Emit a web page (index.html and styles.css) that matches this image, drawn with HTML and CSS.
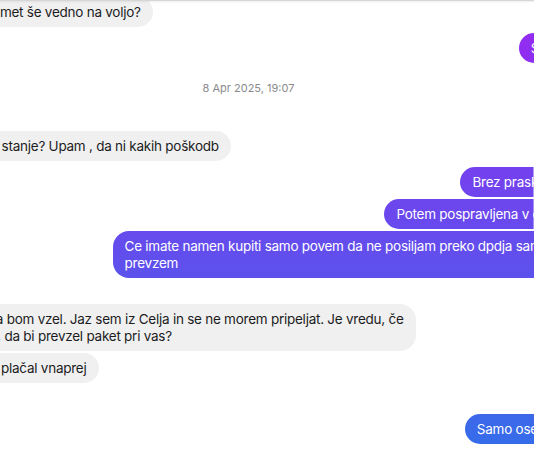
FILE: index.html
```html
<!DOCTYPE html>
<html lang="sl">
<head>
<meta charset="utf-8">
<title>Chat</title>
<link rel="stylesheet" href="styles.css">
</head>
<body>
<div class="topbar"></div>
<div class="chat">
  <div class="row recv first"><div class="bubble">Je predmet še vedno na voljo?</div></div>
  <div class="row sent gap-s"><div class="bubble">Seveda, ja</div></div>
  <div class="stamp">8 Apr 2025, 19:07</div>
  <div class="row recv"><div class="bubble">Kako je stanje? Upam , da ni kakih poškodb</div></div>
  <div class="row sent gap-s"><div class="bubble">Brez prask sploh ne</div></div>
  <div class="row sent gap-g"><div class="bubble">Potem pospravljena v omaro, ok</div></div>
  <div class="row sent gap-g"><div class="bubble">Ce imate namen kupiti samo povem da ne posiljam preko dpdja samo osebni<br>prevzem</div></div>
  <div class="row recv gap-l"><div class="bubble">Okej, ga bom vzel. Jaz sem iz Celja in se ne morem pripeljat. Je vredu, če<br>kolega , da bi prevzel paket pri vas?</div></div>
  <div class="row recv gap-g"><div class="bubble">Bi takoj plačal vnaprej</div></div>
  <div class="row sent gap-xl"><div class="bubble">Samo osebno, okej</div></div>
</div>
</body>
</html>
```

FILE: styles.css
```css
html, body {
  margin: 0;
  padding: 0;
  background: #ffffff;
  overflow: hidden;
  height: 462px;
}

body {
  font-family: Inter, "Noto Sans", "Liberation Sans", sans-serif;
  font-size: 13.5px;
  letter-spacing: -0.25px;
  color: #1c1c1e;
}

.topbar {
  position: absolute;
  top: 0;
  left: 0;
  right: 0;
  height: 1px;
  background: #d6d6d6;
  box-shadow: 0 1px 2px rgba(0, 0, 0, 0.10);
  z-index: 2;
}

.chat {
  display: flex;
  flex-direction: column;
  margin: 0 -58px 0 -95px;
}

.row {
  display: flex;
}

.row.recv {
  justify-content: flex-start;
  padding-left: 36px;
}

.row.sent {
  justify-content: flex-end;
  margin-right: -14px;
}

.bubble {
  padding: 6.5px 12px;
  line-height: 17px;
  border-radius: 16px;
  white-space: nowrap;
}

.recv .bubble {
  background: #f0f0f0;
  color: #1c1c1e;
}

.sent .bubble {
  color: #ffffff;
  background: linear-gradient(180deg, #9b26f1 0%, #326fe9 100%);
  background-attachment: fixed;
}

.first { margin-top: -3px; }
.gap-s { margin-top: 6px; }
.gap-g { margin-top: 2px; }
.gap-l { margin-top: 26px; }
.gap-xl { margin-top: 31px; }

.stamp {
  text-align: center;
  font-size: 11px;
  line-height: 14px;
  letter-spacing: 0;
  color: #8a8a8e;
  padding: 18px 0 36px;
}
```
